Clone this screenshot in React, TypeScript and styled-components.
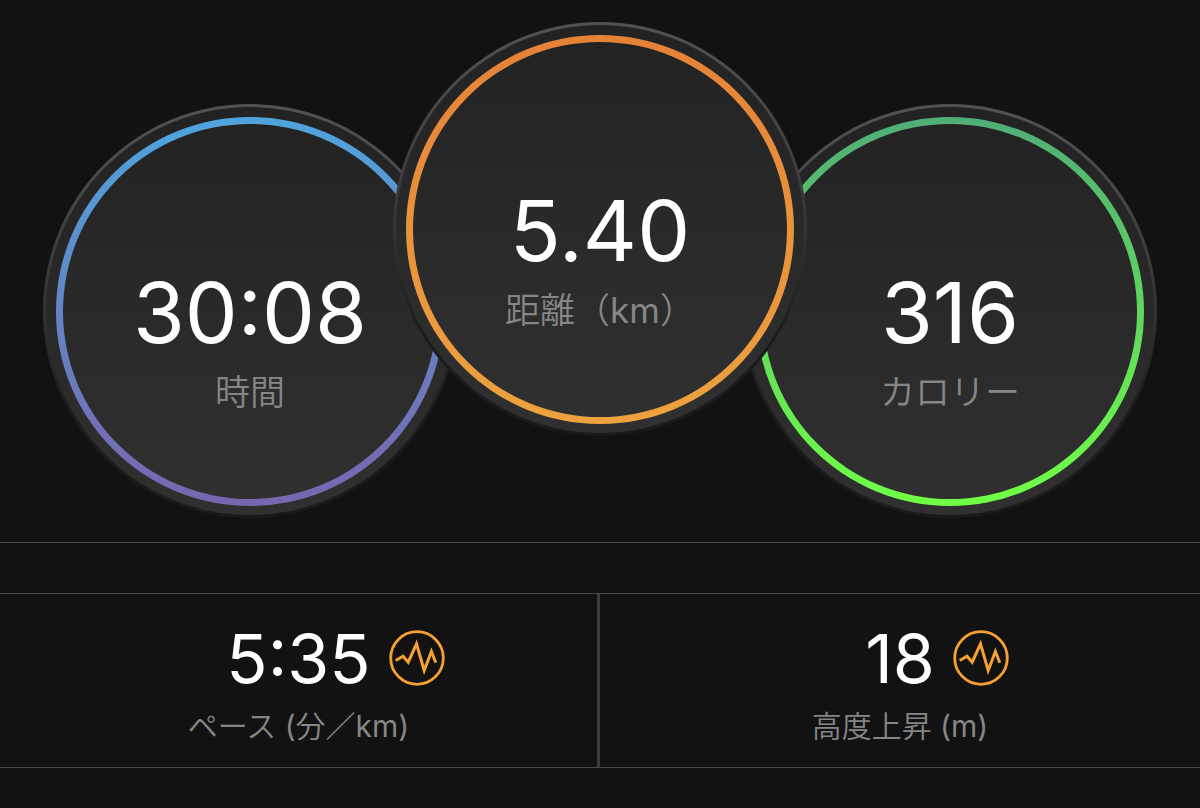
import React, { FC } from 'react';

import styled, { createGlobalStyle } from 'styled-components';

const GlobalStyle = createGlobalStyle`
  * {
    box-sizing: border-box;
  }
  body {
    margin: 0;
    background: #121212;
    color: #fff;
    font-family: Inter, 'Noto Sans CJK JP DemiLight', 'Noto Sans CJK JP', sans-serif;
  }
`;

const Dials = styled.section`
  display: flex;
  justify-content: center;
  align-items: flex-end;
  padding: 22px 0 24px;
  border-bottom: 1px solid #484848;
`;

const Rim = styled.div<{ raised?: boolean }>`
  flex: none;
  position: relative;
  z-index: ${(props) => (props.raised ? 1 : 0)};
  width: 414px;
  padding: 3px;
  border-radius: 50%;
  margin: 0 -32px ${(props) => (props.raised ? 82 : 0)}px;
  background: linear-gradient(#525252, #484848 20%, #333 50%, #1c1c1c 75%, #1a1a1a);
`;

const Plate = styled.div`
  padding: 10px 10px 9px;
  border-radius: 50%;
  background: linear-gradient(#222, #303030);
`;

const Ring = styled.div<{ from: string; to: string }>`
  padding: 7px;
  border-radius: 50%;
  background: linear-gradient(${(props) => props.from}, ${(props) => props.to});
`;

const Face = styled.div`
  display: flex;
  flex-direction: column;
  align-items: center;
  height: 375px;
  padding-top: 137px;
  border-radius: 50%;
  background: linear-gradient(#232323, #303030);
`;

const DialValue = styled.div`
  font-size: 84px;
  line-height: 104px;
`;

const DialLabel = styled.div`
  color: #868686;
  font-size: 35px;
  line-height: 54px;
`;

const Stats = styled.section`
  display: grid;
  grid-template-columns: 1fr 1fr;
  margin-top: 50px;
  border: solid #484848;
  border-width: 1px 0;
`;

const StatCell = styled.div`
  height: 173px;
  padding-top: 22px;
  text-align: center;
  &:first-child {
    border-right: 3px solid #3c3c3c;
  }
`;

const StatRow = styled.div`
  display: grid;
  grid-template-columns: 1fr auto 1fr;
  align-items: center;
  column-gap: 18px;
`;

const StatValue = styled.div`
  grid-column: 2;
  font-size: 68px;
  line-height: 84px;
`;

const ChartButton = styled.button`
  display: block;
  width: 56px;
  height: 56px;
  padding: 0;
  border: 0;
  background: none;
  cursor: pointer;
  svg {
    display: block;
  }
`;

const StatLabel = styled.div`
  color: #868686;
  font-size: 30px;
  line-height: 52px;
`;

const ChartIcon: FC = () => (
  <svg width='56' height='56' viewBox='0 0 56 56' fill='none' stroke='#f5a033'>
    <circle cx='28' cy='28' r='26.3' strokeWidth='2.8' />
    <path
      d='M6.7 30.5 L14 26.2 L19.2 32.2 L27.5 13.8 L35.2 40.5 L42.4 21.5 L46.8 32.8'
      strokeWidth='3'
    />
  </svg>
);

type DialType = {
  value: string;
  label: string;
  from: string;
  to: string;
  raised?: boolean;
};

const Dial: FC<DialType> = ({ value, label, from, to, raised }: DialType) => (
  <Rim raised={raised}>
    <Plate>
      <Ring from={from} to={to}>
        <Face>
          <DialValue>{value}</DialValue>
          <DialLabel>{label}</DialLabel>
        </Face>
      </Ring>
    </Plate>
  </Rim>
);

const Stat: FC<{ value: string; label: string }> = ({
  value,
  label,
}: {
  value: string;
  label: string;
}) => (
  <StatCell>
    <StatRow>
      <StatValue>{value}</StatValue>
      <ChartButton type='button' aria-label={label}>
        <ChartIcon />
      </ChartButton>
    </StatRow>
    <StatLabel>{label}</StatLabel>
  </StatCell>
);

const App: FC = () => (
  <main>
    <GlobalStyle />
    <Dials>
      <Dial value='30:08' label='時間' from='#4fa4dd' to='#7866ae' />
      <Dial value='5.40' label='距離（km）' from='#e58238' to='#eda23f' raised />
      <Dial value='316' label='カロリー' from='#50ad78' to='#70ff45' />
    </Dials>
    <Stats>
      <Stat value='5:35' label='ペース (分／km)' />
      <Stat value='18' label='高度上昇 (m)' />
    </Stats>
  </main>
);

export default App;
